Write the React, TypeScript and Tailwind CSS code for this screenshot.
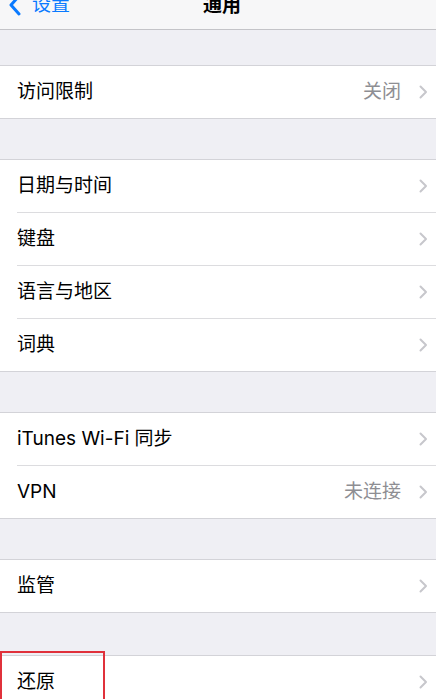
import React from "react";

const Chevron = () => (
  <svg width="9" height="14" viewBox="0 0 9 14" className="ml-[18px] shrink-0">
    <path d="M1.5 1.5 L7 7 L1.5 12.5" fill="none" stroke="#c7c7cc" strokeWidth="2" strokeLinecap="round" strokeLinejoin="round" />
  </svg>
);

type RowProps = { label: string; value?: string; last?: boolean };

const Row = ({ label, value, last }: RowProps) => (
  <div className="flex pl-[17px] bg-white">
    <div
      className={
        "flex-1 flex items-center pr-[8px] " +
        (last ? "h-[52px]" : "h-[53px] border-b border-[#dcdcdf]")
      }
    >
      <span className="text-[19px] text-black flex-1">{label}</span>
      {value ? <span className="text-[19px] text-[#8e8e93]">{value}</span> : null}
      <Chevron />
    </div>
  </div>
);

const Group = ({ children, className = "" }: { children: React.ReactNode; className?: string }) => (
  <div className={"border-y border-[#d3d3d8] bg-white " + className}>{children}</div>
);

export default function App() {
  return (
    <div
      className="w-[436px] h-[699px] overflow-hidden bg-[#efeff4]"
      style={{ fontFamily: "Inter, 'Noto Sans CJK SC', sans-serif" }}
    >
      <div className="h-[30px] bg-[#f7f7f8] border-b border-[#c4c4c8] relative overflow-hidden">
        <div className="absolute left-[8px] top-[-6px] flex items-center text-[#0a7aff]">
          <svg width="14" height="22" viewBox="0 0 14 22">
            <path d="M11 2 L3 11 L11 20" fill="none" stroke="#0a7aff" strokeWidth="3" strokeLinecap="round" strokeLinejoin="round" />
          </svg>
          <span className="ml-[10px] text-[19px] leading-[22px]">设置</span>
        </div>
        <div className="absolute left-0 right-0 top-[-6px] text-center">
          <span className="text-[19px] leading-[22px] font-semibold text-black ml-[8px]">通用</span>
        </div>
      </div>

      <Group className="mt-[35px]">
        <Row label="访问限制" value="关闭" last />
      </Group>

      <Group className="mt-[40px]">
        <Row label="日期与时间" />
        <Row label="键盘" />
        <Row label="语言与地区" />
        <Row label="词典" last />
      </Group>

      <Group className="mt-[40px]">
        <Row label="iTunes Wi-Fi 同步" />
        <Row label="VPN" value="未连接" last />
      </Group>

      <Group className="mt-[40px]">
        <Row label="监管" last />
      </Group>

      <div className="relative mt-[42px]">
        <Group>
          <Row label="还原" last />
        </Group>
        <div className="absolute left-0 top-[-4px] w-[105px] h-[80px] border-2 border-[#e0313b]" />
      </div>
    </div>
  );
}
